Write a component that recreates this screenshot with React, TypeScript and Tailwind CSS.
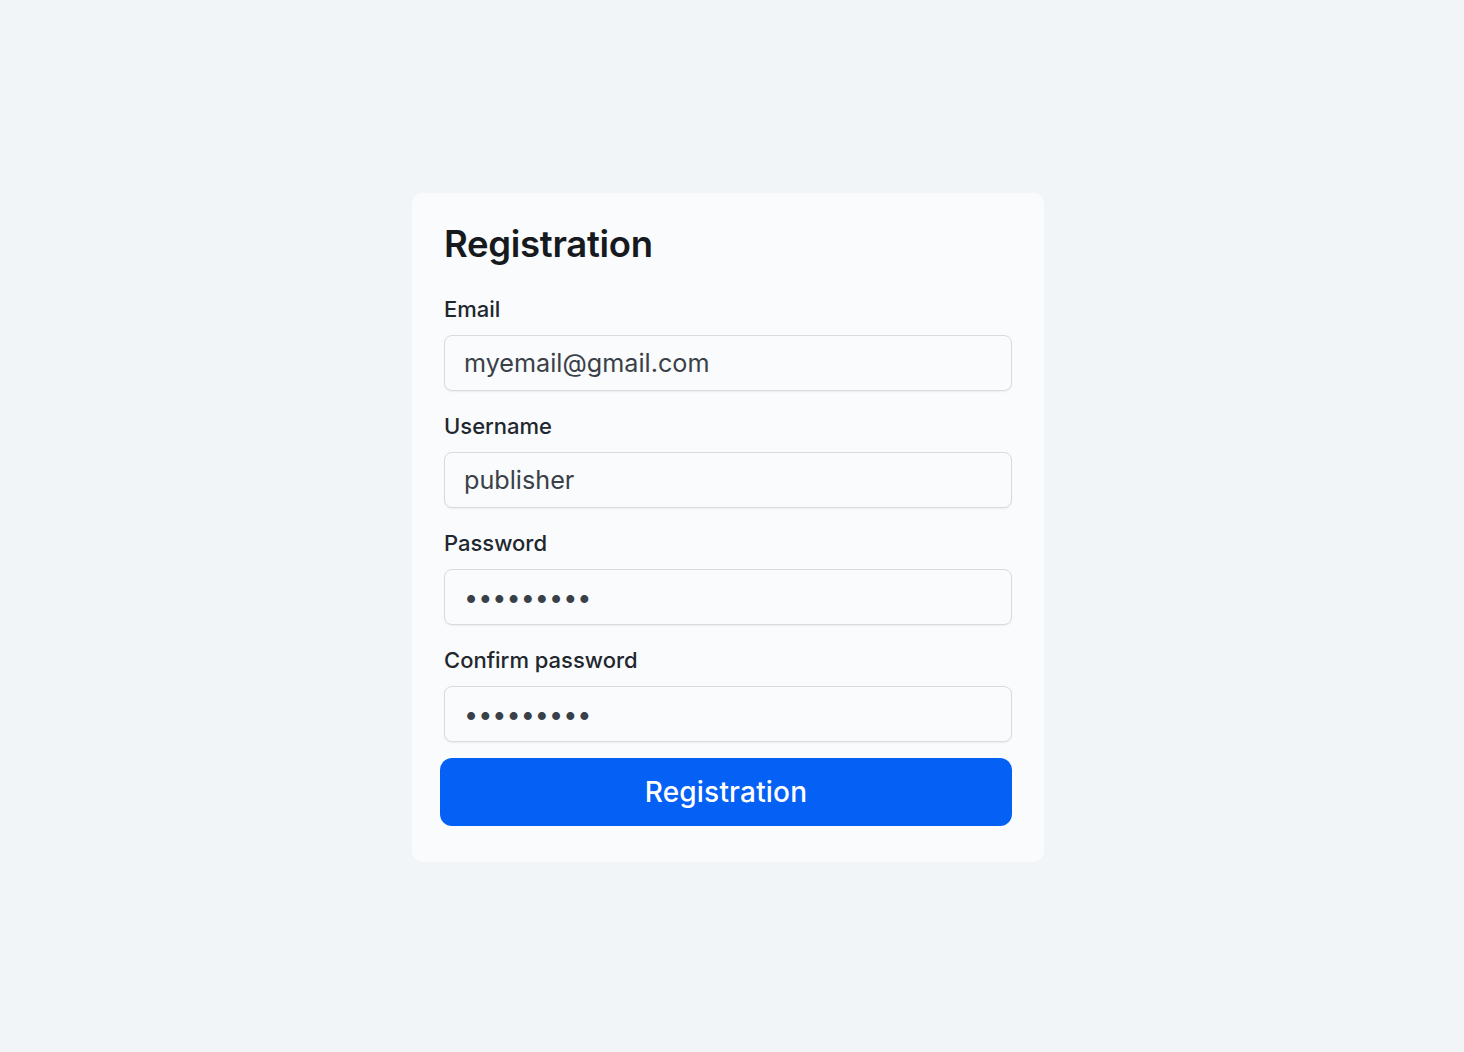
import React from 'react';

const fields = [
  { label: 'Email', type: 'text', value: 'myemail@gmail.com' },
  { label: 'Username', type: 'text', value: 'publisher' },
  { label: 'Password', type: 'password', value: 'secret123' },
  { label: 'Confirm password', type: 'password', value: 'secret123' },
];

export default function App() {
  return (
    <div
      className="min-h-screen w-full bg-[#f1f5f8] flex justify-center pt-[193px] pr-2"
      style={{ fontFamily: 'Inter, "Noto Sans", sans-serif' }}
    >
      <div className="w-[632px] h-[669px] bg-[#f9fbfd] rounded-[10px] px-8 pt-8">
        <h1 className="text-[36.5px] leading-[38px] font-semibold text-[#16191d] tracking-[-0.3px]">
          Registration
        </h1>

        <div className="mt-[32px]">
          {fields.map((f) => (
            <div key={f.label} className="mb-[21px]">
              <label className="block text-[22px] leading-[28px] font-medium text-[#22272d]">
                {f.label}
              </label>
              <input
                readOnly
                type={f.type}
                value={f.value}
                className="mt-3 block w-full h-[56px] pl-[19px] pr-5 rounded-[8px] border border-[#d8dce1] bg-[#f9fbfd] shadow-[0_1px_2px_rgba(0,0,0,0.06)] text-[25.2px] text-[#3a4048] outline-none"
              />
            </div>
          ))}
        </div>

        <button className="-mt-[5px] -ml-1 w-[572px] h-[68px] rounded-[12px] bg-[#0560f5] text-white text-[28px] font-medium tracking-[0.2px]">
          Registration
        </button>
      </div>
    </div>
  );
}
